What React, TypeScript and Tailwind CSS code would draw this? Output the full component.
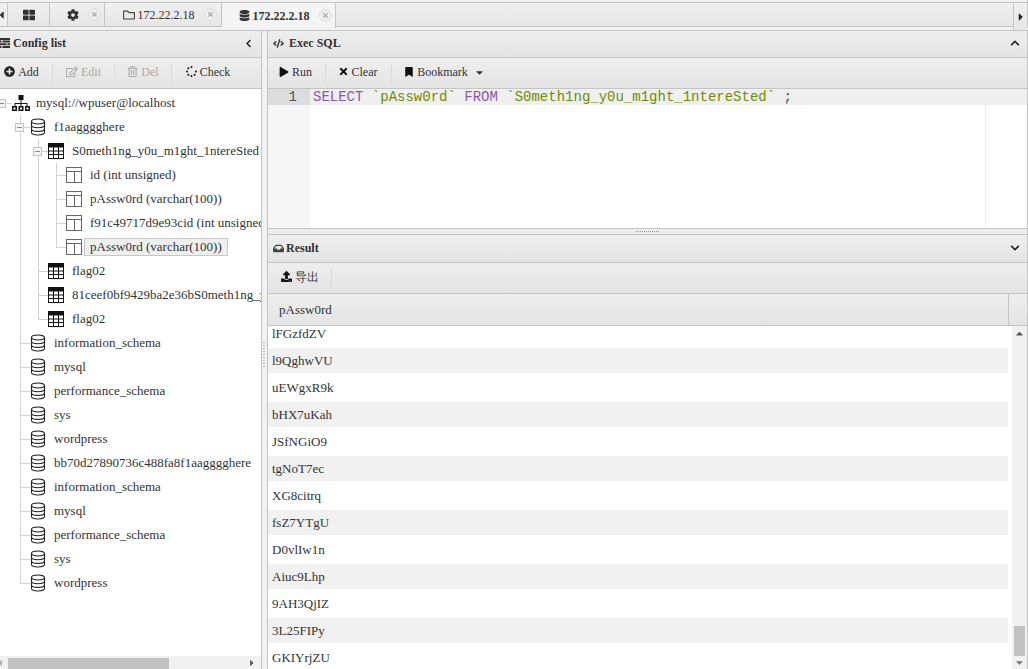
import React from 'react';
import {
  FaBookmark,
  FaChevronDown,
  FaChevronLeft,
  FaChevronUp,
  FaCaretDown,
  FaCaretLeft,
  FaCaretRight,
  FaCaretUp,
  FaCog,
  FaDatabase,
  FaInbox,
  FaPlay,
  FaPlusCircle,
  FaRegEdit,
  FaRegFolder,
  FaRegTrashAlt,
  FaSpinner,
  FaThLarge,
  FaTimes,
  FaUpload,
  FaCode,
} from 'react-icons/fa';

type Kind = 'root' | 'db' | 'table' | 'col';

type Node = {
  level: number;
  kind: Kind;
  label: string;
  guides?: number[];
  open?: boolean;
  last?: boolean;
  selected?: boolean;
};

const tree: Node[] = [
  { level: 0, kind: 'root', label: 'mysql://wpuser@localhost', open: true, last: true },
  { level: 1, kind: 'db', label: 'f1aagggghere', open: true },
  { level: 2, kind: 'table', label: 'S0meth1ng_y0u_m1ght_1ntereSted', guides: [1], open: true },
  { level: 3, kind: 'col', label: 'id (int unsigned)', guides: [1, 2] },
  { level: 3, kind: 'col', label: 'pAssw0rd (varchar(100))', guides: [1, 2] },
  { level: 3, kind: 'col', label: 'f91c49717d9e93cid (int unsigned)', guides: [1, 2] },
  { level: 3, kind: 'col', label: 'pAssw0rd (varchar(100))', guides: [1, 2], last: true, selected: true },
  { level: 2, kind: 'table', label: 'flag02', guides: [1] },
  { level: 2, kind: 'table', label: '81ceef0bf9429ba2e36bS0meth1ng_y0u_m1ght', guides: [1] },
  { level: 2, kind: 'table', label: 'flag02', guides: [1], last: true },
  { level: 1, kind: 'db', label: 'information_schema' },
  { level: 1, kind: 'db', label: 'mysql' },
  { level: 1, kind: 'db', label: 'performance_schema' },
  { level: 1, kind: 'db', label: 'sys' },
  { level: 1, kind: 'db', label: 'wordpress' },
  { level: 1, kind: 'db', label: 'bb70d27890736c488fa8f1aagggghere' },
  { level: 1, kind: 'db', label: 'information_schema' },
  { level: 1, kind: 'db', label: 'mysql' },
  { level: 1, kind: 'db', label: 'performance_schema' },
  { level: 1, kind: 'db', label: 'sys' },
  { level: 1, kind: 'db', label: 'wordpress', last: true },
];

const rows = [
  'lFGzfdZV',
  'l9QghwVU',
  'uEWgxR9k',
  'bHX7uKah',
  'JSfNGiO9',
  'tgNoT7ec',
  'XG8citrq',
  'fsZ7YTgU',
  'D0vlIw1n',
  'Aiuc9Lhp',
  '9AH3QjIZ',
  '3L25FIPy',
  'GKIYrjZU',
];

function ListIcon() {
  return (
    <svg width="11" height="10" viewBox="0 0 11 10" fill="#333" className="ml-[-1px]">
      <path d="M0 0h11v2H0zM0 2.6h2.5v1.8H0zM3.5 2.6H11v1.8H3.5zM0 5.2h7.5V7H0zM8.5 5.2H11V7H8.5zM0 7.8h2.5V10H0zM3.5 7.8H11V10H3.5z" />
    </svg>
  );
}

function SitemapIcon() {
  return (
    <svg width="18" height="16" viewBox="0 0 18 16" fill="#111">
      <path d="M6.5 0h5v5h-5z" />
      <path d="M8.5 5h1v3h6v3h-1V9h-5v2h-1V9h-5v2h-1V8h6z" />
      <path d="M0 11h5v5H0zM6.5 11h5v5h-5zM13 11h5v5h-5z" />
      <path d="M1.5 12.5h2v2h-2zM8 12.5h2v2H8zM14.5 12.5h2v2h-2z" fill="#fff" />
    </svg>
  );
}

function DbIcon() {
  return (
    <svg width="16" height="18" viewBox="0 0 16 18" fill="none" stroke="#222" strokeWidth="1.1">
      <ellipse cx="8" cy="3.5" rx="6.5" ry="2.5" />
      <path d="M1.5 3.5v11c0 1.4 2.9 2.5 6.5 2.5s6.5-1.1 6.5-2.5v-11" />
      <path d="M1.5 7.2c0 1.4 2.9 2.5 6.5 2.5s6.5-1.1 6.5-2.5" />
      <path d="M1.5 10.9c0 1.4 2.9 2.5 6.5 2.5s6.5-1.1 6.5-2.5" />
    </svg>
  );
}

function TableIcon() {
  return (
    <svg width="16" height="16" viewBox="0 0 16 16" fill="none" stroke="#111" strokeWidth="1">
      <rect x="0.5" y="0.5" width="15" height="15" />
      <path d="M0 2.5h16" strokeWidth="4" />
      <path d="M0 8h16M0 11.5h16M5.5 4v12M10.5 4v12" />
    </svg>
  );
}

function ColIcon() {
  return (
    <svg width="16" height="16" viewBox="0 0 16 16" fill="none" stroke="#666" strokeWidth="1">
      <rect x="0.5" y="0.5" width="15" height="15" />
      <path d="M0.5 4.5h15M8.5 4.5v11" />
    </svg>
  );
}

function NodeIcon({ kind }: { kind: Kind }) {
  if (kind === 'root') return <SitemapIcon />;
  if (kind === 'db') return <DbIcon />;
  if (kind === 'table') return <TableIcon />;
  return <ColIcon />;
}

function TreeRow({ node }: { node: Node }) {
  const cols = Array.from({ length: node.level }, (_, i) => i);
  return (
    <div className="flex h-6 items-stretch whitespace-nowrap">
      <div className="w-[2px] shrink-0" />
      {cols.map((i) => (
        <div
          key={i}
          className={
            'w-[18px] shrink-0 ' + (node.guides?.includes(i) ? 'border-l border-[#d2d2d2]' : '')
          }
        />
      ))}
      <div className="relative w-[10px] shrink-0">
        {node.level > 0 && (
          <div
            className={
              'absolute left-0 top-0 w-px bg-[#d2d2d2] ' + (node.last ? 'h-[12px]' : 'h-full')
            }
          />
        )}
        <div className="absolute left-0 top-[12px] h-px w-full bg-[#d2d2d2]" />
        {node.open && (
          <div className="absolute left-[-5px] top-[8px] flex h-[9px] w-[9px] items-center justify-center border border-[#c4c4c4] bg-[#f4f4f4]">
            <div className="h-px w-[5px] bg-[#888]" />
          </div>
        )}
      </div>
      <div className="flex w-[18px] shrink-0 items-center justify-start">
        <NodeIcon kind={node.kind} />
      </div>
      <div className="flex items-center">
        <span
          className={
            'flex h-[18px] items-center ' +
            (node.selected ? 'border border-[#c8c8c8] bg-[#efefef] px-[5px]' : 'px-[6px]')
          }
        >
          {node.label}
        </span>
      </div>
    </div>
  );
}

function Sep() {
  return <div className="h-5 w-px shrink-0 bg-[#cfdde3]" />;
}

function ToolBtn({
  icon,
  label,
  muted,
  width,
}: {
  icon: React.ReactNode;
  label: string;
  muted?: boolean;
  width: string;
}) {
  return (
    <div
      className={
        'flex shrink-0 items-center justify-center gap-[3px] pb-[3px] ' +
        width +
        ' ' +
        (muted ? 'text-[#aaa]' : 'text-[#333]')
      }
    >
      {icon}
      <span>{label}</span>
    </div>
  );
}

function Tab({
  children,
  active,
  width,
  close,
}: {
  children: React.ReactNode;
  active?: boolean;
  width: string;
  close?: boolean;
}) {
  return (
    <div
      className={
        'flex shrink-0 items-center justify-center gap-[3px] border-r border-[#c4c4c4] text-[12px] ' +
        width +
        ' ' +
        (close ? 'pl-[13px] ' : '') +
        (active ? 'h-[25px] bg-[#f4f4f4] font-bold' : 'h-[24px] border-b bg-gradient-to-b from-[#f0f0f0] to-[#e6e6e6]')
      }
    >
      {children}
      {close && (
        <span className="ml-[6px] flex h-[13px] w-[13px] items-center justify-center rounded-full border border-[#ddd] bg-[#eee]">
          <FaTimes className="text-[7px] text-[#aaa]" />
        </span>
      )}
    </div>
  );
}

const barClass =
  'flex shrink-0 items-center border-b border-[#c4c4c4] bg-gradient-to-b from-[#eeeeee] to-[#e4e4e4]';

export default function App() {
  return (
    <div className="flex h-[669px] w-[1028px] flex-col overflow-hidden bg-[#f1f1f1] font-['Liberation_Serif',serif] text-[13px] text-[#333]">
      {/* tabs */}
      <div className="flex h-[28px] shrink-0 items-start border-r border-[#c4c4c4] pt-[2px]">
        <div className="flex h-[25px] w-full items-start border-t border-[#c4c4c4]">
          <div className="flex h-[24px] w-[8px] shrink-0 items-center overflow-hidden border-b border-r border-[#c4c4c4] bg-[#eee]">
            <FaCaretLeft className="ml-[-4px] text-[12px] text-[#333]" />
          </div>
          <Tab width="w-[42px]">
            <FaThLarge className="text-[12px] text-[#333]" />
          </Tab>
          <Tab width="w-[55px]" close>
            <FaCog className="text-[12px] text-[#333]" />
          </Tab>
          <Tab width="w-[117px]" close>
            <FaRegFolder className="text-[12px] text-[#444]" />
            <span>172.22.2.18</span>
          </Tab>
          <Tab width="w-[114px]" active close>
            <FaDatabase className="text-[11px] text-[#333]" />
            <span>172.22.2.18</span>
          </Tab>
          <div className="h-[24px] flex-1 border-b border-[#c4c4c4] bg-gradient-to-b from-[#f0f0f0] to-[#e6e6e6]" />
          <div className="flex h-[27px] w-[14px] shrink-0 items-center justify-center border-l border-[#c4c4c4] bg-gradient-to-b from-[#f0f0f0] to-[#e6e6e6]">
            <FaCaretRight className="text-[12px] text-[#222]" />
          </div>
        </div>
      </div>

      <div className="mt-[2px] flex min-h-0 flex-1 border-t border-[#c4c4c4]">
        {/* left panel */}
        <div className="flex w-[262px] shrink-0 flex-col border-r border-[#c4c4c4]">
          <div className={barClass + ' h-[27px] justify-between pr-[8px] pb-[2px] font-bold'}>
            <div className="flex items-center gap-[3px] text-[12px]">
              <ListIcon />
              <span>Config list</span>
            </div>
            <FaChevronLeft className="text-[9px] text-[#222]" />
          </div>
          <div className={barClass + ' h-[31px] text-[12px]'}>
            <ToolBtn width="w-[43px]" icon={<FaPlusCircle className="text-[11px] text-[#222]" />} label="Add" />
            <div className="w-[9px]" />
            <Sep />
            <ToolBtn width="w-[61px]" icon={<FaRegEdit className="text-[12px]" />} label="Edit" muted />
            <Sep />
            <ToolBtn width="w-[56px]" icon={<FaRegTrashAlt className="text-[11px]" />} label="Del" muted />
            <Sep />
            <ToolBtn width="w-[72px]" icon={<FaSpinner className="text-[11px] text-[#222]" />} label="Check" />
          </div>
          <div className="min-h-0 flex-1 overflow-hidden bg-white pt-[2px] text-[13px]">
            {tree.map((n, i) => (
              <TreeRow key={i} node={n} />
            ))}
          </div>
          <div className="flex h-[13px] shrink-0 items-end bg-[#f1f1f1]">
            <div className="w-[8px] shrink-0 overflow-hidden">
              <FaCaretLeft className="mb-[1px] ml-[-5px] text-[10px] text-[#aaa]" />
            </div>
            <div className="h-[11px] w-[161px] bg-[#c1c1c1]" />
            <div className="flex-1" />
            <FaCaretRight className="mb-[1px] mr-[4px] text-[10px] text-[#555]" />
          </div>
        </div>

        {/* splitter */}
        <div className="flex w-[5px] shrink-0 flex-col items-center justify-center pr-[1px] pt-[10px]">
          <div className="h-[26px] w-[2px] bg-[repeating-linear-gradient(180deg,#bbb_0,#bbb_1px,transparent_1px,transparent_3px)]" />
        </div>

        {/* right panel */}
        <div className="flex min-w-0 flex-1 flex-col border-x border-[#c4c4c4]">
          <div className={barClass + ' h-[27px] justify-between pb-[2px] pr-[7px] pl-[5px] font-bold text-[12px]'}>
            <div className="flex items-center gap-[3px]">
              <FaCode className="text-[11px] text-[#444]" />
              <span className="ml-[2px]">Exec SQL</span>
            </div>
            <FaChevronUp className="text-[10px] text-[#222]" />
          </div>
          <div className={barClass + ' h-[31px] text-[12px]'}>
            <ToolBtn width="w-[55px]" icon={<FaPlay className="text-[10px] text-[#111]" />} label="Run" />
            <div className="w-[2px]" />
            <Sep />
            <ToolBtn width="w-[63px]" icon={<FaTimes className="text-[11px] text-[#111]" />} label="Clear" />
            <div className="w-[2px]" />
            <Sep />
            <div className="w-[6px]" />
            <ToolBtn width="w-[76px]" icon={<FaBookmark className="text-[10px] text-[#111]" />} label="Bookmark" />
            <FaCaretDown className="mb-[1px] text-[11px] text-[#333]" />
          </div>

          {/* editor */}
          <div className="flex h-[140px] shrink-0 border-b border-[#c4c4c4] bg-white font-['Liberation_Mono',monospace] text-[14px]">
            <div className="w-[42px] shrink-0 bg-[#f6f6f6]">
              <div className="h-[16px] bg-[#dcdcdc] pr-[13px] text-right leading-[16px] text-[#555]">1</div>
            </div>
            <div className="flex-1">
              <div className="flex h-[16px]">
                <div className="h-[16px] flex-1 whitespace-pre bg-[#efefef] pl-[3px] leading-[16px]">
                  <span className="text-[#8959a8]">SELECT</span>{' '}
                  <span className="text-[#718c00]">`pAssw0rd`</span>{' '}
                  <span className="text-[#8959a8]">FROM</span>{' '}
                  <span className="text-[#718c00]">`S0meth1ng_y0u_m1ght_1ntereSted`</span>{' '}
                  <span className="text-[#4d4d4c]">;</span>
                </div>
              </div>
              <div className="ml-[675px] h-[123px] border-l border-[#ececec]" />
            </div>
          </div>

          {/* horizontal splitter */}
          <div className="flex h-[6px] shrink-0 items-center justify-center border-b border-[#c4c4c4] bg-[#ededed]">
            <div className="h-px w-[24px] bg-[repeating-linear-gradient(90deg,#999_0,#999_1px,transparent_1px,transparent_2px)]" />
          </div>

          <div className={barClass + ' h-[28px] justify-between pb-[1px] pr-[7px] pl-[5px] font-bold text-[12px]'}>
            <div className="flex items-center gap-[2px]">
              <FaInbox className="text-[11px] text-[#444]" />
              <span>Result</span>
            </div>
            <FaChevronDown className="text-[10px] text-[#222]" />
          </div>
          <div className={barClass + ' h-[31px] text-[12px]'}>
            <ToolBtn width="w-[63px]" icon={<FaUpload className="text-[11px] text-[#111]" />} label="导出" />
            <Sep />
          </div>
          <div className={barClass + ' h-[32px]'}>
            <div className="flex h-full w-[741px] items-center border-r border-[#c4c4c4] pl-[11px] text-[13px]">
              pAssw0rd
            </div>
          </div>

          {/* rows */}
          <div className="flex min-h-0 flex-1 bg-white">
            <div className="min-w-0 flex-1 overflow-hidden">
              <div className="mt-[-5px] flex w-[740px] flex-col gap-[2px]">
                {rows.map((r, i) => (
                  <div
                    key={r}
                    className={'flex h-[25px] shrink-0 items-center pl-[4px] ' + (i % 2 ? 'bg-[#f1f1f1]' : '')}
                  >
                    {r}
                  </div>
                ))}
              </div>
            </div>
            <div className="flex w-[15px] shrink-0 flex-col items-center bg-[#f1f1f1] pt-[2px]">
              <FaCaretUp className="text-[11px] text-[#555]" />
              <div className="flex-1" />
              <div className="h-[30px] w-[11px] bg-[#c1c1c1]" />
              <FaCaretDown className="my-[1px] text-[11px] text-[#777]" />
            </div>
          </div>
        </div>
      </div>
    </div>
  );
}
